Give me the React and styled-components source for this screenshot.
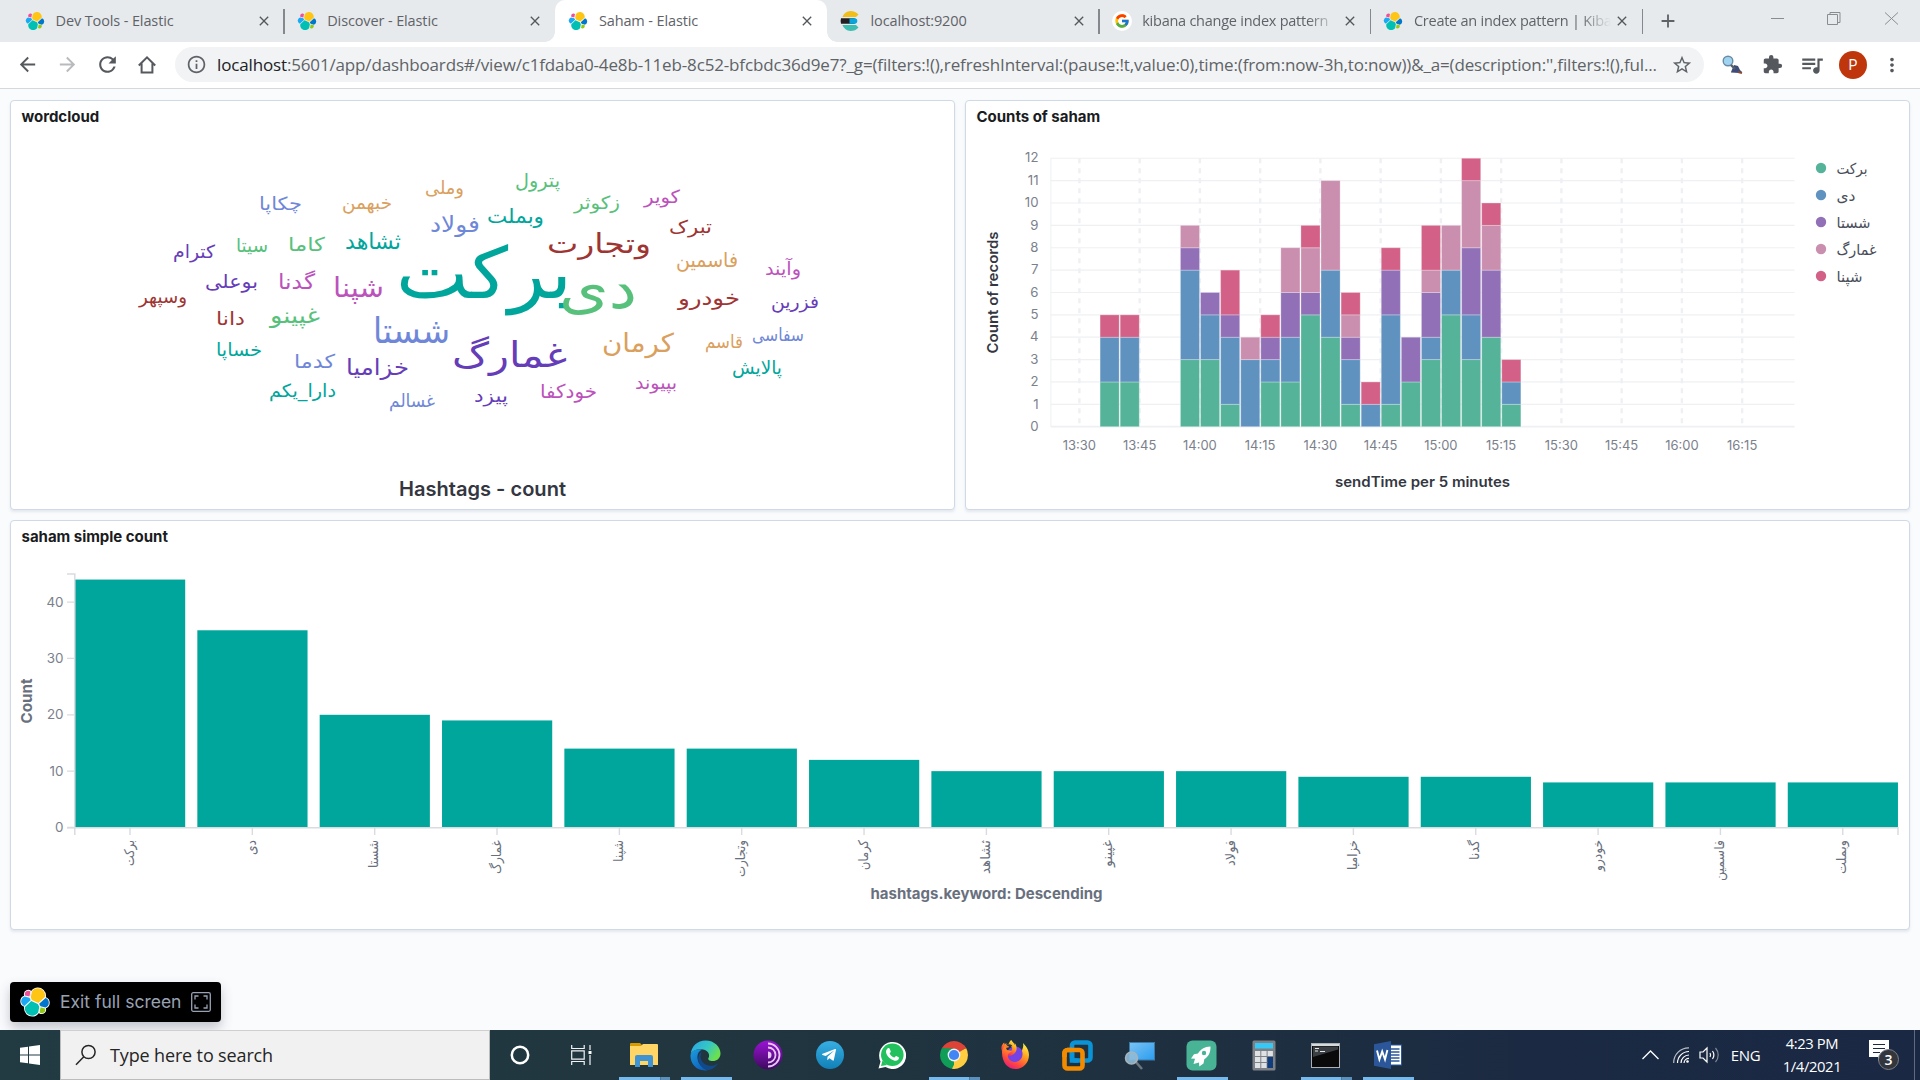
import React from "react";
import styled, { createGlobalStyle, css } from "styled-components";
import {
  MdArrowBack, MdArrowForward, MdRefresh, MdInfoOutline, MdStarBorder,
  MdExtension, MdQueueMusic, MdMoreVert, MdClose, MdAdd,
} from "react-icons/md";
import { FaTelegramPlane, FaFirefoxBrowser } from "react-icons/fa";
import { FcGoogle } from "react-icons/fc";

const UI = `"Open Sans", "Noto Sans", sans-serif`;
const INTER = `Inter, "DejaVu Sans", sans-serif`;
const ARABIC = `"DejaVu Sans", sans-serif`;

const GlobalStyle = createGlobalStyle`
  * { box-sizing: border-box; }
  html, body { margin: 0; padding: 0; overflow: hidden; }
`;

const Screen = styled.div`
  width: 1920px;
  height: 1080px;
  display: flex;
  flex-direction: column;
  overflow: hidden;
  background: #fafbfd;
  font-family: ${UI};
`;

/* ---------- browser chrome ---------- */
const TabStrip = styled.div`
  height: 42px;
  flex: none;
  display: flex;
  padding-left: 12px;
  background: #e7eaed;
`;

const Tab = styled.div`
  position: relative;
  width: 271.7px;
  height: 42px;
  display: flex;
  align-items: center;
  padding: 0 13px 0 13px;
  color: #5f6368;
  ${(p) => p.$divider && css`
    &::before {
      content: "";
      position: absolute;
      right: -1px;
      top: 9px;
      width: 1.5px;
      height: 25px;
      background: #85898d;
    }
  `}
  ${(p) => p.$active && css`
    background: #fff;
    border-radius: 10px 10px 0 0;
    z-index: 1;
    &::before, &::after {
      content: "";
      position: absolute;
      bottom: 0;
      width: 10px;
      height: 10px;
    }
    &::before { left: -10px; background: radial-gradient(circle at 0 0, transparent 9.5px, #fff 10px); }
    &::after { right: -10px; background: radial-gradient(circle at 100% 0, transparent 9.5px, #fff 10px); }
  `}
`;

const Favicon = styled.span`
  width: 20px;
  height: 20px;
  flex: none;
  display: grid;
  place-items: center;
  border-radius: 50%;
  background: ${(p) => (p.$plate ? "#fff" : "transparent")};
  svg { display: block; }
`;

const TabTitle = styled.span`
  flex: 1;
  margin-left: 10.5px;
  font-size: 14.5px;
  line-height: 20px;
  letter-spacing: ${(p) => (p.$fade ? -0.25 : -0.12)}px;
  white-space: nowrap;
  overflow: hidden;
  ${(p) => p.$fade && css`
    mask-image: linear-gradient(90deg, #000 84%, transparent 100%);
  `}
`;

const TabClose = styled.span`
  width: 15px;
  height: 16px;
  margin-left: 3px;
  flex: none;
  display: grid;
  place-items: center;
  color: #54585c;
`;

const NewTab = styled.span`
  width: 52px;
  display: grid;
  place-items: center;
  color: #5f6368;
`;

const WindowControls = styled.div`
  margin-left: auto;
  display: flex;
  height: 37px;
  svg { width: 57px; height: 37px; display: block; }
`;

const Toolbar = styled.div`
  height: 46.5px;
  flex: none;
  display: flex;
  align-items: center;
  padding: 0 0 0 7px;
  background: #fff;
  border-bottom: 1.5px solid #d6d9dc;
`;

const ToolButton = styled.span`
  width: ${(p) => p.$w || 40}px;
  height: 34px;
  display: grid;
  place-items: center;
  color: ${(p) => (p.$dim ? "#b8babd" : "#55595e")};
  svg { display: block; }
`;

const AddressBar = styled.div`
  width: 1529px;
  height: 35px;
  margin: 0 8px;
  padding: 0 11px 0 11px;
  display: flex;
  align-items: center;
  border-radius: 18px;
  background: #f1f3f4;
  color: #5f6368;
  svg { flex: none; }
`;

const Url = styled.span`
  flex: 1;
  margin-left: 10px;
  font-size: 17px;
  line-height: 24px;
  letter-spacing: -0.15px;
  white-space: nowrap;
  b { font-weight: 400; color: #202124; }
`;

const Avatar = styled.span`
  width: 28px;
  height: 28px;
  border-radius: 50%;
  display: grid;
  place-items: center;
  background: #bf360c;
  color: #fff;
  font: 14px/28px Roboto, sans-serif;
`;

/* ---------- dashboard ---------- */
const Dashboard = styled.main`
  flex: 1;
  display: grid;
  grid-template-columns: 945px 945px;
  grid-template-rows: 410px 410px 40px;
  column-gap: 10px;
  row-gap: 10px;
  align-content: start;
  padding: 11.5px 10px 0;
`;

const Panel = styled.section`
  grid-column: ${(p) => (p.$wide ? "1 / -1" : "auto")};
  display: flex;
  flex-direction: column;
  background: #fff;
  border: 1px solid #d0d9e6;
  border-radius: 4px;
  box-shadow: 0 2px 3px rgba(152, 162, 179, 0.22);
  overflow: hidden;
  > svg { display: block; flex: none; }
`;

const PanelTitle = styled.h2`
  margin: 0;
  height: 30px;
  padding: 0 10.5px;
  font: 700 15px/32px ${INTER};
  letter-spacing: -0.02px;
  color: #1a1c21;
`;

const ExitButton = styled.button`
  width: 211px;
  height: 40px;
  margin-top: 42px;
  padding: 0 10px;
  display: flex;
  align-items: center;
  border: 0;
  border-radius: 4px;
  background: #000;
  box-shadow: 0 6px 12px rgba(60, 70, 90, 0.3);
  color: #98a2b3;
  font: 400 17.5px/40px ${INTER};
  letter-spacing: 0;
  white-space: nowrap;
  span { flex: 1; text-align: left; margin-left: 10px; }
  svg { display: block; flex: none; }
`;

/* ---------- taskbar ---------- */
const Taskbar = styled.footer`
  height: 50px;
  flex: none;
  display: flex;
  background: linear-gradient(90deg, #223a42 0%, #21363f 35%, #1e3040 62%, #1b2a42 80%, #1a2844 100%);
`;

const StartButton = styled.div`
  width: 60px;
  display: grid;
  place-items: center;
`;

const SearchBox = styled.div`
  width: 429.5px;
  display: flex;
  align-items: center;
  padding-left: 14px;
  background: #f1f1f1;
  border: 1px solid #bcbcbc;
  border-top-color: #cfcfcf;
  color: #252525;
  font-size: 18px;
  letter-spacing: -0.14px;
  span { margin-left: 13px; padding-bottom: 1px; }
`;

const TaskButton = styled.div`
  position: relative;
  width: 61.97px;
  display: grid;
  place-items: center;
  padding-right: 1px;
  svg { display: block; }
  ${(p) => p.$open && css`
    &::after {
      content: "";
      position: absolute;
      left: 5.5px;
      right: 5.5px;
      bottom: 0;
      height: 3px;
      background: ${p.$open === "many"
        ? "linear-gradient(90deg, #76b9ed 0 40.5px, #4c7a9e 40.5px 41.5px, #5b90ba 41.5px)"
        : "#76b9ed"};
    }
  `}
`;

const Tray = styled.div`
  margin-left: auto;
  display: flex;
  align-items: center;
  color: #fff;
  svg { display: block; }
`;

const TrayIcon = styled.span`
  width: ${(p) => p.$w}px;
  display: grid;
  place-items: center;
`;

const Language = styled.span`
  width: 45px;
  text-align: center;
  font-size: 15px;
  letter-spacing: -0.3px;
`;

const Clock = styled.div`
  width: 88px;
  display: flex;
  flex-direction: column;
  align-items: center;
  font-size: 14.8px;
  line-height: 23px;
  letter-spacing: -0.4px;
`;

const PeekLine = styled.i`
  width: 1px;
  height: 50px;
  margin: 0 5px 0 2px;
  background: #5d6a80;
`;

/* ---------- svg text ---------- */
const AxisText = styled.text`
  font-family: ${INTER};
  font-size: ${(p) => p.$size || 13}px;
  font-weight: ${(p) => p.$weight || 400};
  fill: ${(p) => p.$fill || "#7b818c"};
`;

const Word = styled.text`
  font-family: ${ARABIC};
  direction: rtl;
`;

/* ---------- logos ---------- */
const CLUSTER = [
  ["#fec514", "M12.58 13.787l7.002 3.211 7.066-6.213a7.849 7.849 0 00.152-1.557c0-4.287-3.464-7.764-7.739-7.764a7.73 7.73 0 00-6.386 3.36l-1.175 6.118 1.08 2.845z"],
  ["#00bfb3", "M5.333 21.215a7.923 7.923 0 00-.15 1.566c0 4.304 3.494 7.802 7.787 7.802 2.585 0 4.99-1.286 6.44-3.441l1.166-6.1-1.556-2.986-7.03-3.213-6.657 6.372z"],
  ["#f04e98", "M5.288 9.067l4.8 1.137L11.14 4.73a3.785 3.785 0 00-6.069 3.01c0 .445.07.89.217 1.327z"],
  ["#1ba9f5", "M4.87 10.214C2.727 10.924 1.24 12.996 1.24 15.261c0 2.206 1.36 4.175 3.403 4.955l6.735-6.1-1.236-2.65-5.272-1.252z"],
  ["#93c90e", "M20.873 27.177a3.76 3.76 0 002.285.774c2.09 0 3.79-1.706 3.79-3.804 0-.46-.08-.905-.235-1.322l-4.788-1.121-1.052 5.473z"],
  ["#0077cc", "M21.848 20.563l5.281 1.239a5.379 5.379 0 003.63-5.046 5.354 5.354 0 00-3.42-4.969l-6.905 6.061 1.414 2.715z"],
];

const ElasticLogo = ({ size = 20, outline }) => (
  <svg width={size} height={size} viewBox="0 0 32 32">
    {outline && CLUSTER.map(([c, d]) => <path key={c} d={d} fill="#fff" stroke="#fff" strokeWidth="1.9" />)}
    {CLUSTER.map(([c, d]) => <path key={c} d={d} fill={c} />)}
  </svg>
);

const ElasticsearchLogo = () => (
  <svg width="20" height="20" viewBox="0 0 20 20">
    <path d="M2.4 6A9.3 9.3 0 0 1 10.5 0c3.3 0 6 1.4 8 3.6L16 6z" fill="#f0bf1a" />
    <path d="M1 7.2h12.5a2.8 2.8 0 0 1 0 5.6H1a10 10 0 0 1 0-5.6z" fill="#231f20" />
    <path d="M9.5 7.2h5a2.8 2.8 0 0 1 0 5.6h-5z" fill="#07a5de" />
    <path d="M2.4 14A9.3 9.3 0 0 0 10.5 20c3.3 0 6-1.4 8-3.6L16 14z" fill="#3ebeb0" />
  </svg>
);

const TABS = [
  { title: "Dev Tools - Elastic", icon: <ElasticLogo />, divider: true },
  { title: "Discover - Elastic", icon: <ElasticLogo /> },
  { title: "Saham - Elastic", icon: <ElasticLogo />, active: true },
  { title: "localhost:9200", icon: <ElasticsearchLogo />, divider: true },
  { title: "kibana change index pattern", icon: <FcGoogle size={16} />, plate: true, divider: true, fade: true },
  { title: "Create an index pattern | Kibana", icon: <ElasticLogo />, divider: true, fade: true },
];

const Browser = () => (
  <>
    <TabStrip>
      {TABS.map((t) => (
        <Tab key={t.title} $active={t.active} $divider={t.divider}>
          <Favicon $plate={t.plate}>{t.icon}</Favicon>
          <TabTitle $fade={t.fade}>{t.title}</TabTitle>
          <TabClose><MdClose size={16} /></TabClose>
        </Tab>
      ))}
      <NewTab><MdAdd size={22} /></NewTab>
      <WindowControls>
        <svg viewBox="0 0 57 37"><path d="M22 18.5h13" stroke="#8a8d90" /></svg>
        <svg viewBox="0 0 57 37"><path d="M21.5 14.5h10v10h-10zM24 14.5v-2h10v10h-2.5" fill="none" stroke="#8a8d90" /></svg>
        <svg viewBox="0 0 57 37"><path d="M22 12.5l13 12M35 12.5l-13 12" stroke="#8a8d90" /></svg>
      </WindowControls>
    </TabStrip>
    <Toolbar>
      <ToolButton><MdArrowBack size={23} /></ToolButton>
      <ToolButton $dim><MdArrowForward size={23} /></ToolButton>
      <ToolButton><MdRefresh size={25} /></ToolButton>
      <ToolButton>
        <svg width="20" height="20" viewBox="0 0 20 20"><path d="M1.8 10.5L10 2.4l8.2 8.1M4.6 8.5v9h10.8v-9" fill="none" stroke="currentColor" strokeWidth="2" /></svg>
      </ToolButton>
      <AddressBar>
        <MdInfoOutline size={21} />
        <Url><b>localhost</b>:5601/app/dashboards#/view/c1fdaba0-4e8b-11eb-8c52-bfcbdc36d9e7?_g=(filters:!(),refreshInterval:(pause:!t,value:0),time:(from:now-3h,to:now))&amp;_a=(description:'',filters:!(),ful...</Url>
        <MdStarBorder size={22} />
      </AddressBar>
      <ToolButton>
        <svg width="22" height="22" viewBox="0 0 22 22">
          <path d="M10 18l3-7 4 1 2 4 2 2-3 1-8-.5z" fill="#3d4d78" />
          <circle cx="7" cy="7" r="4.8" fill="#9fd4f0" stroke="#6b8ba5" strokeWidth="1.4" />
          <path d="M10 11l4 4" stroke="#55606e" strokeWidth="2.4" />
          <path d="M17 18l4 1" stroke="#8a4b35" strokeWidth="2" />
        </svg>
      </ToolButton>
      <ToolButton><MdExtension size={21} /></ToolButton>
      <ToolButton><MdQueueMusic size={26} /></ToolButton>
      <ToolButton $w={42}><Avatar>P</Avatar></ToolButton>
      <ToolButton $w={36}><MdMoreVert size={22} /></ToolButton>
    </Toolbar>
  </>
);

/* ---------- word cloud ---------- */
const C = { teal: "#00a69b", green: "#57c17b", blue: "#6f87d8", purple: "#663db8", mag: "#bc52bc", red: "#9e3533", orange: "#daa05d" };

// text, left, right, baseline, font size, colour
const WORDS = [
  ["برکت", 396, 572, 298, 71, C.teal],
  ["دی", 559, 637, 308, 56, C.green],
  ["شستا", 373, 450, 343, 35, C.blue],
  ["غمارگ", 452, 567, 367, 35, C.purple],
  ["وتجارت", 547, 651, 253, 27, C.red],
  ["شپنا", 333, 384, 297, 27, C.mag],
  ["کرمان", 602, 674, 352, 26, C.orange],
  ["ثشاهد", 345, 401, 249, 22, C.teal],
  ["غپینو", 270, 320, 323, 22, C.green],
  ["فولاد", 430, 480, 232, 22, C.blue],
  ["خزامیا", 346, 409, 375, 22, C.purple],
  ["گدنا", 278, 315, 289, 21, C.mag],
  ["خودرو", 678, 740, 305, 20, C.red],
  ["فاسمین", 676, 738, 267, 20, C.orange],
  ["وبملت", 487, 544, 223, 20, C.teal],
  ["بوعلی", 205, 258, 288, 19, C.purple],
  ["کاما", 288, 325, 251, 19, C.green],
  ["خودکفا", 540, 597, 398, 19, C.mag],
  ["کدما", 294, 335, 368, 19, C.blue],
  ["سیتا", 236, 268, 252, 19, C.green],
  ["پترول", 515, 560, 187, 19, C.green],
  ["زکوثر", 574, 620, 209, 18, C.green],
  ["کویر", 644, 680, 203, 18, C.mag],
  ["تبرک", 669, 712, 233, 18, C.red],
  ["وملی", 425, 464, 194, 18, C.orange],
  ["خبهمن", 342, 392, 209, 18, C.orange],
  ["چکاپا", 259, 302, 210, 18, C.blue],
  ["کترام", 173, 215, 258, 18, C.purple],
  ["وسپهر", 139, 187, 303, 18, C.red],
  ["دانا", 216, 245, 325, 18, C.red],
  ["خساپا", 216, 262, 356, 18, C.teal],
  ["دارا_یکم", 269, 336, 397, 18, C.teal],
  ["غسالم", 389, 435, 407, 18, C.blue],
  ["پیزد", 474, 508, 402, 18, C.purple],
  ["بپیوند", 635, 677, 389, 18, C.mag],
  ["پالایش", 732, 782, 374, 18, C.teal],
  ["سفاسی", 752, 804, 341, 18, C.blue],
  ["قاسم", 705, 743, 348, 18, C.orange],
  ["فزرین", 771, 819, 308, 18, C.purple],
  ["وآیند", 765, 801, 275, 18, C.mag],
];

const WordCloud = () => (
  <svg width="943" height="378" viewBox="11 131 943 378">
    {WORDS.map(([text, l, r, y, size, fill]) => (
      <Word key={text} x={(l + r) / 2} y={y} fontSize={size} fill={fill} textAnchor="middle" textLength={r - l} lengthAdjust="spacingAndGlyphs">{text}</Word>
    ))}
    <AxisText x="482.5" y="496" textAnchor="middle" $size={20} $weight={600} $fill="#343741" textLength="167" lengthAdjust="spacingAndGlyphs">Hashtags - count</AxisText>
  </svg>
);

/* ---------- stacked histogram ---------- */
// name, colour, label length
const SERIES = [
  ["برکت", "#54b399", 31], ["دی", "#6092c0", 19], ["شستا", "#9170b8", 34], ["غمارگ", "#ca8eae", 40], ["شپنا", "#d36086", 26],
];
const STACKS = [
  [2, 2, 0, 0, 1], [2, 2, 0, 0, 1], [], [], [3, 4, 1, 1, 0], [3, 2, 1, 0, 0], [1, 3, 1, 0, 2],
  [0, 3, 0, 1, 0], [2, 1, 1, 0, 1], [2, 2, 2, 2, 0], [5, 0, 1, 2, 1], [4, 3, 0, 4, 0],
  [1, 2, 1, 1, 1], [0, 1, 0, 0, 1], [1, 4, 2, 0, 1], [2, 0, 2, 0, 0], [3, 1, 2, 1, 2],
  [5, 2, 0, 2, 0], [3, 2, 3, 3, 1], [4, 0, 3, 2, 1], [1, 1, 0, 0, 1],
];
const TIMES = ["13:30", "13:45", "14:00", "14:15", "14:30", "14:45", "15:00", "15:15", "15:30", "15:45", "16:00", "16:15"];

const Histogram = () => {
  const yOf = (v) => 426.7 - v * 22.37;
  return (
    <svg width="943" height="378" viewBox="966 131 943 378">
      {Array.from({ length: 13 }, (_, v) => (
        <g key={v}>
          <path d={`M1050.7 ${yOf(v)}H1794.5`} stroke="#eef0f3" strokeWidth={v ? 1.2 : 1.8} />
          <AxisText x="1038.5" y={yOf(v) + 4.2} textAnchor="end" $size={13.2}>{v}</AxisText>
        </g>
      ))}
      <path d="M1050.9 158.3V426.7" stroke="#eef0f3" strokeWidth="1" />
      {TIMES.map((t, i) => {
        const x = 1079.4 + i * 60.25;
        return (
          <g key={t}>
            <path d={`M${x} 158.3V426.7`} stroke="#eef0f4" strokeWidth="2.4" strokeDasharray="5 5" />
            <AxisText x={x} y="450" textAnchor="middle">{t}</AxisText>
          </g>
        );
      })}
      {STACKS.map((stack, i) => {
        let base = 0;
        return stack.map((v, s) => {
          if (!v) return null;
          base += v;
          return <rect key={`${i}-${s}`} x={1100.1 + i * 20.083} y={yOf(base)} width="19.1" height={v * 22.37} fill={SERIES[s][1]} stroke="#fff" strokeOpacity="0.28" strokeWidth="1" />;
        });
      })}
      <AxisText x="1422.5" y="487" textAnchor="middle" $size={14.5} $weight={600} $fill="#343741" textLength="175" lengthAdjust="spacingAndGlyphs">sendTime per 5 minutes</AxisText>
      <AxisText transform="translate(998 292.5) rotate(-90)" textAnchor="middle" $size={14.5} $weight={600} $fill="#343741" textLength="122" lengthAdjust="spacingAndGlyphs">Count of records</AxisText>
      {SERIES.map(([name, color, w], i) => (
        <g key={name}>
          <circle cx="1821" cy={168 + i * 27} r="5.2" fill={color} />
          <Word x={1836.5 + w / 2} y={173.5 + i * 27} fontSize="15" fill="#4a4f5a" textAnchor="middle" textLength={w} lengthAdjust="spacingAndGlyphs">{name}</Word>
        </g>
      ))}
    </svg>
  );
};

/* ---------- simple count ---------- */
// name, count, label length
const COUNTS = [
  ["برکت", 44, 26], ["دی", 35, 15], ["شستا", 20, 28], ["غمارگ", 19, 34], ["شپنا", 14, 22],
  ["وتجارت", 14, 37], ["کرمان", 12, 30], ["ثشاهد", 10, 34], ["غپینو", 10, 27], ["فولاد", 10, 26],
  ["خزامیا", 9, 30], ["گدنا", 9, 20], ["خودرو", 8, 31], ["فاسمین", 8, 41], ["وبملت", 8, 34],
];

const CountChart = () => {
  const yOf = (v) => 827.5 - v * 5.635;
  return (
    <svg width="1898" height="378" viewBox="11 551 1898 378">
      {COUNTS.map(([name, v, w], i) => {
        const x = 75 + i * 122.34;
        return (
          <g key={name}>
            <rect x={x} y={yOf(v)} width="110.2" height={yOf(0) - yOf(v)} fill="#00a69b" />
            <path d={`M${x + 55} 828V835`} stroke="#d9dbde" strokeWidth="1.4" />
            <Word transform={`translate(${x + 58.5} ${840 + w / 2}) rotate(-90)`} fontSize="13.5" fill="#69707d" textAnchor="middle" textLength={w} lengthAdjust="spacingAndGlyphs">{name}</Word>
          </g>
        );
      })}
      <path d="M67 574H74.8V835M67 827.8H1898V835" fill="none" stroke="#d9dbde" strokeWidth="1.5" />
      {[0, 10, 20, 30, 40].map((v) => (
        <g key={v}>
          <path d={`M67 ${yOf(v)}H75`} stroke="#d9dbde" strokeWidth="1.3" />
          <AxisText x="63.5" y={yOf(v) + 4.5} textAnchor="end" $size={13.4}>{v}</AxisText>
        </g>
      ))}
      <AxisText transform="translate(32 701) rotate(-90)" textAnchor="middle" $size={15} $weight={700} $fill="#69707d" textLength="45" lengthAdjust="spacingAndGlyphs">Count</AxisText>
      <AxisText x="986.5" y="899" textAnchor="middle" $size={15} $weight={700} $fill="#69707d" textLength="232" lengthAdjust="spacingAndGlyphs">hashtags.keyword: Descending</AxisText>
    </svg>
  );
};

/* ---------- taskbar icons ---------- */
const FolderIcon = () => (
  <svg width="30" height="26" viewBox="0 0 30 26">
    <path d="M1 2a1 1 0 0 1 1-1h9l3 3H1z" fill="#d99a00" />
    <path d="M1 4h11l2-2h14a1 1 0 0 1 1 1v20H1z" fill="#ffd566" />
    <path d="M6 25V15a2 2 0 0 1 2-2h14a2 2 0 0 1 2 2v10h-5v-6h-8v6z" fill="#3f93d2" />
  </svg>
);
const EdgeIcon = () => (
  <svg width="31" height="31" viewBox="0 0 31 31">
    <defs>
      <linearGradient id="edgeTop" x1="0" y1="0" x2="1" y2="0.5"><stop offset="0.1" stopColor="#2baae4" /><stop offset="0.6" stopColor="#36c8c2" /><stop offset="1" stopColor="#6be04f" /></linearGradient>
      <linearGradient id="edgeSide" x1="0" y1="0" x2="0.7" y2="1"><stop offset="0" stopColor="#1b9de0" /><stop offset="1" stopColor="#0f5fb8" /></linearGradient>
    </defs>
    <path d="M.7 14C1.4 6.3 7.5.5 15.5.5 24.5.5 30.5 7 30.5 13.5c0 5-4 7.5-7.5 7.500-4 0-5.5-1.5-4.5-3 1.5-2.5.5-7.5-5.5-8.5C7.5 8.700 2 11 .7 14z" fill="url(#edgeTop)" />
    <path d="M.5 16C.5 11 6 8.500 12 9.500c-3.500 1.800-5 5-4.500 9 .6 5 4.500 9.500 10 11.700C7.500 31.800.5 24.500.5 16z" fill="url(#edgeSide)" />
    <path d="M12 11.500c-3 5-1 10.500 3.500 13 4.500 2.300 9 1.500 12.800-1.200 0 0-4 6.400-10.600 7C11 28.500 7 22 8.500 16.500c.6-2.300 1.700-4 3.500-5z" fill="#114a8b" />
  </svg>
);
const TorIcon = () => (
  <svg width="30" height="30" viewBox="0 0 30 30">
    <defs><linearGradient id="tor" x1="0" y1="0" x2="0" y2="1"><stop offset="0" stopColor="#9b12d6" /><stop offset="1" stopColor="#3d0a5e" /></linearGradient></defs>
    <circle cx="15" cy="15" r="14.5" fill="url(#tor)" />
    <path d="M15 3.5a11.500 11.500 0 0 1 0 23M15 7.500a7.500 7.500 0 0 1 0 15" fill="none" stroke="#e6c7f5" strokeWidth="1.8" />
    <path d="M15 11.500a3.500 3.500 0 0 1 0 7z" fill="#e6c7f5" />
  </svg>
);
const TelegramIcon = () => (
  <svg width="28" height="28" viewBox="0 0 28 28">
    <defs><linearGradient id="tg" x1="0" y1="0" x2="0" y2="1"><stop offset="0" stopColor="#37aee2" /><stop offset="1" stopColor="#1181b8" /></linearGradient></defs>
    <circle cx="14" cy="14" r="14" fill="url(#tg)" />
    <FaTelegramPlane x={5} y={6} size={16} color="#fff" />
  </svg>
);
const WhatsAppIcon = () => (
  <svg width="28" height="28" viewBox="0 0 28 28">
    <path d="M.5 27.500l2-7A13.500 13.500 0 1 1 7.500 26z" fill="#fff" />
    <circle cx="14.3" cy="13.7" r="11.3" fill="#22c15e" />
    <path d="M3 25l1.500-5.500L9 24z" fill="#22c15e" />
    <path d="M9.500 7.500c1-.8 2-.4 2.300.5l.9 2.200c.3.900-.9 1.600-1 2.200 1 2 2.600 3.400 4.500 4.100.8-.3 1.300-1.700 2-1.600l2.500 1.300c.5.400.2 1.800-.5 2.500-1.700 1.700-4.500 1-7-.5-2.800-1.700-5-4.700-5.200-7 0-1.500.6-2.900 1.500-3.700z" fill="#fff" />
  </svg>
);
const ChromeIcon = () => (
  <svg width="28" height="28" viewBox="0 0 28 28">
    <path d="M14 14L1.900 7A14 14 0 0 1 26.100 7z" fill="#db4437" />
    <path d="M14 14L14 28A14 14 0 0 1 1.900 7z" fill="#0f9d58" />
    <path d="M14 14L26.100 7A14 14 0 0 1 14 28z" fill="#ffcd40" />
    <path d="M1.900 7l6.600 10L14 7.600z" fill="#0f9d58" />
    <path d="M14 7.600h12.400L24 4 14 3z" fill="#db4437" />
    <path d="M19.500 17.200L14 28l-2-.2 4-8z" fill="#ffcd40" />
    <circle cx="14" cy="14" r="6.4" fill="#f1f1f1" />
    <circle cx="14" cy="14" r="5.1" fill="#4285f4" />
  </svg>
);
const FoxShape = styled(FaFirefoxBrowser)`
  fill: url(#fox);
`;
const FirefoxIcon = () => (
  <svg width="29" height="30" viewBox="0 0 29 30">
    <defs>
      <linearGradient id="fox" x1="0.8" y1="0" x2="0.2" y2="1"><stop offset="0" stopColor="#fff44f" /><stop offset="0.35" stopColor="#ffa31f" /><stop offset="0.7" stopColor="#ff4a3d" /><stop offset="1" stopColor="#e31587" /></linearGradient>
    </defs>
    <circle cx="14" cy="15" r="8.5" fill="#7542e5" />
    <FoxShape x={0} y={0} width={29} height={30} />
    <path d="M1 12c0 11 6 17 13.500 17S28 23 28 15c0-5-3-9-6-12 1 4-1 6-1 8 2 6-2 11-7 11-4 0-8-3-7-8l4-3-5-1-2-4c-2 2-3 4-3 6z" fill="url(#fox)" />
  </svg>
);
const VmIcon = () => (
  <svg width="31" height="31" viewBox="0 0 31 31" fill="none" strokeWidth="4.6">
    <rect x="10" y="2.5" width="18.5" height="18" rx="3" stroke="#0a93d6" />
    <rect x="2.5" y="10" width="18" height="18.5" rx="3" stroke="#f38b00" />
    <path d="M10 12.5v8h6" stroke="#0a93d6" />
    <path d="M10 10h-4.500a3 3 0 0 0-3 3v4" stroke="#f38b00" />
  </svg>
);
const RemoteIcon = () => (
  <svg width="31" height="29" viewBox="0 0 31 29">
    <defs><linearGradient id="rd" x1="0" y1="0" x2="1" y2="1"><stop offset="0" stopColor="#7cc3f3" /><stop offset="1" stopColor="#2a9df0" /></linearGradient></defs>
    <rect x="5.5" y="1.5" width="25" height="17.5" fill="url(#rd)" stroke="#3c79a3" />
    <path d="M11 20l7 8" stroke="#6b7680" strokeWidth="2.5" />
    <circle cx="7.5" cy="17" r="6" fill="#8ebbd8" fillOpacity="0.9" stroke="#a8b4bc" strokeWidth="1.5" />
  </svg>
);
const RocketIcon = () => (
  <svg width="31" height="31" viewBox="0 0 31 31">
    <rect x="0.5" y="0.5" width="30" height="30" rx="6" fill="#48b395" />
    <path d="M24.500 6.500c-6 0-10 3-12.500 7l-4 .7-3 4.300 4 .3-1.500 5.200 5.500-1.500.3 4 4.200-3 .8-4.200c4-2.500 6.500-7 6.200-12.800z" fill="#fff" />
    <circle cx="18" cy="13" r="2.2" fill="#48b395" />
  </svg>
);
const CalcIcon = () => (
  <svg width="24" height="31" viewBox="0 0 24 31">
    <rect x="0.5" y="0.5" width="23" height="30" rx="1.5" fill="#7d8186" />
    <rect x="3" y="3" width="18" height="5.5" fill="#37c8f5" />
    {[0, 1, 2].map((r) => [0, 1, 2].map((c) => (
      <rect key={`${r}${c}`} x={3 + c * 6.3} y={11 + r * 6} width="5.3" height="5" fill={c === 2 && r > 0 ? "#123d7c" : "#dfe2e5"} />
    )))}
    <rect x="15.6" y="17" width="5.3" height="11" fill="#123d7c" />
  </svg>
);
const ConsoleIcon = () => (
  <svg width="29" height="25" viewBox="0 0 29 25">
    <rect x="0.5" y="0.5" width="28" height="24" fill="#0a0a0a" stroke="#aab0b5" />
    <path d="M1 2h27" stroke="#d6dadd" strokeWidth="2" />
    <path d="M2 3.500h25v3L2 14z" fill="#3a3f43" />
    <path d="M4 5.500h4M4 8h3M9 8.500h5" stroke="#e6e6e6" strokeWidth="1.2" />
  </svg>
);
const WordIcon = () => (
  <svg width="28" height="28" viewBox="0 0 28 28">
    <rect x="15" y="4" width="12.5" height="20" fill="#fff" stroke="#2b579a" />
    <path d="M17 8h8.500M17 11h8.500M17 14h8.500M17 17h8.500M17 20h8.500" stroke="#2b579a" strokeWidth="1.4" />
    <path d="M0 3.200L17 0v28L0 24.800z" fill="#2b579a" />
    <path d="M3 9.500l2.400 9 2.800-8 2.800 8 2.400-9.500" fill="none" stroke="#fff" strokeWidth="1.9" />
  </svg>
);

const TASKS = [
  [FolderIcon, "many"], [EdgeIcon, "one"], [TorIcon], [TelegramIcon], [WhatsAppIcon], [ChromeIcon, "many"],
  [FirefoxIcon], [VmIcon], [RemoteIcon], [RocketIcon, "one"], [CalcIcon], [ConsoleIcon, "many"], [WordIcon, "one"],
];

const WindowsTaskbar = () => (
  <Taskbar>
    <StartButton>
      <svg width="20" height="20" viewBox="0 0 20 20" fill="#fff"><path d="M0 2.800l8-1.100v7.800H0zM9 1.600L20 0v9.500H9zM0 10.500h8v7.800l-8-1.100zM9 10.500h11V20L9 18.400z" /></svg>
    </StartButton>
    <SearchBox>
      <svg width="22" height="22" viewBox="0 0 22 22" fill="none" stroke="#252525" strokeWidth="1.5"><circle cx="13.5" cy="8" r="6.6" /><path d="M8.800 12.800L1 20.800" /></svg>
      <span>Type here to search</span>
    </SearchBox>
    <TaskButton>
      <svg width="20" height="20" viewBox="0 0 20 20"><circle cx="10" cy="10" r="8.2" fill="none" stroke="#fff" strokeWidth="2.5" /></svg>
    </TaskButton>
    <TaskButton>
      <svg width="21" height="20" viewBox="0 0 21 20" fill="none" stroke="#f2f4f5" strokeWidth="1.2">
        <path d="M.7 0v3.500h12.500V0M.7 20v-3.500h12.500V20M.7 5.800h12.500v8.400H.7zM19 0v5M19 10v10" /><path d="M17.500 6h3v3h-3z" fill="#fff" stroke="none" />
      </svg>
    </TaskButton>
    {TASKS.map(([Icon, open], i) => <TaskButton key={i} $open={open}><Icon /></TaskButton>)}
    <Tray>
      <TrayIcon $w={30}><svg width="17" height="10" viewBox="0 0 17 10"><path d="M.5 9l8-8 8 8" fill="none" stroke="#fff" strokeWidth="1.3" /></svg></TrayIcon>
      <TrayIcon $w={31}>
        <svg width="16" height="16" viewBox="0 0 16 16" fill="none" stroke="#fff" strokeWidth="1.2">
          <path d="M.7 16A15 15 0 0 1 16 .8" opacity="0.7" /><path d="M4.500 16A11.500 11.500 0 0 1 16 4.500" /><path d="M8 16a8 8 0 0 1 8-8" /><path d="M11 16a5 5 0 0 1 5-4.600" /><circle cx="14.5" cy="14.5" r="1.3" fill="#fff" stroke="none" />
        </svg>
      </TrayIcon>
      <TrayIcon $w={27}>
        <svg width="21" height="18" viewBox="0 0 21 18" fill="none" stroke="#fff" strokeWidth="1.2">
          <path d="M1 6h3l4-4v14l-4-4H1z" /><path d="M11 7a4 4 0 0 1 0 4M13.500 5a7 7 0 0 1 0 8" /><path d="M16.500 2a10.500 10.500 0 0 1 0 14" opacity="0.45" />
        </svg>
      </TrayIcon>
      <Language>ENG</Language>
      <Clock><span>4:23 PM</span><span>1/4/2021</span></Clock>
      <TrayIcon $w={56}>
        <svg width="32" height="32" viewBox="0 0 32 32">
          <path d="M1 1h20v17h-7l-4 4v-4H1z" fill="#fff" /><path d="M5 5.500h12M5 9.500h12M5 13.500h7" stroke="#1b2a42" strokeWidth="1.2" />
          <circle cx="20.5" cy="20.5" r="10" fill="#33373d" stroke="#7c8087" />
          <text x="20.5" y="25.6" textAnchor="middle" fontFamily="Open Sans, sans-serif" fontSize="14" fontWeight="600" fill="#fff">3</text>
        </svg>
      </TrayIcon>
      <PeekLine />
    </Tray>
  </Taskbar>
);

export default function App() {
  return (
    <Screen>
      <GlobalStyle />
      <Browser />
      <Dashboard>
        <Panel><PanelTitle>wordcloud</PanelTitle><WordCloud /></Panel>
        <Panel><PanelTitle>Counts of saham</PanelTitle><Histogram /></Panel>
        <Panel $wide><PanelTitle>saham simple count</PanelTitle><CountChart /></Panel>
        <ExitButton>
          <ElasticLogo size={30} outline />
          <span>Exit full screen</span>
          <svg width="20" height="20" viewBox="0 0 20 20" fill="none" stroke="#98a2b3" strokeWidth="1.3">
            <rect x="0.7" y="0.7" width="18.6" height="18.6" rx="1.5" />
            <path d="M4 7.500V4h3.500M12.500 4H16v3.500M16 12.500V16h-3.500M7.500 16H4v-3.500" />
          </svg>
        </ExitButton>
      </Dashboard>
      <WindowsTaskbar />
    </Screen>
  );
}
